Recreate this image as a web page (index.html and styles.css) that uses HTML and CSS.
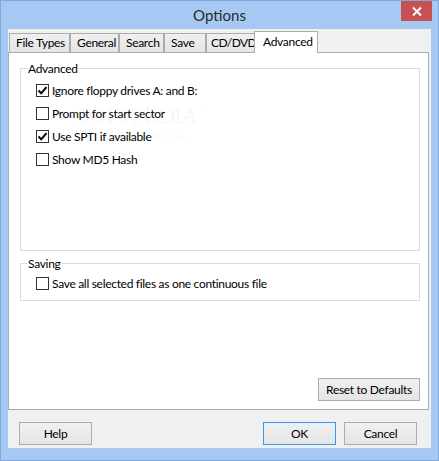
FILE: index.html
```html
<!DOCTYPE html>
<html>
<head>
<meta charset="utf-8">
<title>Options</title>
<link rel="stylesheet" href="styles.css">
</head>
<body>
<div class="window">
  <div class="titlebar">
    <span class="title">Options</span>
    <button class="close" aria-label="Close">
      <svg width="10" height="9" viewBox="0 0 10 9"><path d="M1 0.5 L9 8.5 M9 0.5 L1 8.5" stroke="#fff" stroke-width="2"/></svg>
    </button>
  </div>
  <div class="client">
    <div class="tabstrip">
      <div class="tab t-files">File Types</div>
      <div class="tab t-general">General</div>
      <div class="tab t-search">Search</div>
      <div class="tab t-save">Save</div>
      <div class="tab t-cd">CD/DVD</div>
      <div class="tab active t-adv">Advanced</div>
    </div>
    <div class="panel">
      <fieldset class="group group-adv">
        <legend>Advanced</legend>
        <label class="row"><span class="cb checked"><svg width="11" height="11" viewBox="0 0 11 11"><path d="M1.5 5.5 L4.2 8.3 L9.5 2.2" fill="none" stroke="#000" stroke-width="2"/></svg></span>Ignore floppy drives A: and B:</label>
        <label class="row"><span class="cb"></span>Prompt for start sector</label>
        <label class="row"><span class="cb checked"><svg width="11" height="11" viewBox="0 0 11 11"><path d="M1.5 5.5 L4.2 8.3 L9.5 2.2" fill="none" stroke="#000" stroke-width="2"/></svg></span>Use SPTI if available</label>
        <label class="row"><span class="cb"></span>Show MD5 Hash</label>
        <div class="watermark" aria-hidden="true">SOFTPEDIA<sup>™</sup><span class="wm-url">www.softpedia.com</span></div>
      </fieldset>
      <fieldset class="group group-save">
        <legend>Saving</legend>
        <label class="row"><span class="cb"></span>Save all selected files as one continuous file</label>
      </fieldset>
      <div class="panel-actions">
        <button class="btn btn-reset">Reset to Defaults</button>
      </div>
    </div>
    <div class="dialog-buttons">
      <button class="btn">Help</button>
      <div class="spacer"></div>
      <button class="btn default">OK</button>
      <button class="btn">Cancel</button>
    </div>
  </div>
</div>
</body>
</html>
```

FILE: styles.css
```css
* { box-sizing: border-box; }
html, body { margin: 0; padding: 0; }
body {
  font-family: "Lato", "Noto Sans", sans-serif;
  font-size: 12px;
  letter-spacing: -0.3px;
  color: #000;
  background: #a5c9f2;
}
.window {
  width: 439px;
  height: 461px;
  background: #a5c9f2;
  border: 1px solid #7fa9db;
  display: flex;
  flex-direction: column;
}
.titlebar {
  height: 28px;
  display: grid;
  grid-template-columns: 1fr auto 1fr;
  align-items: center;
}
.title {
  grid-column: 2;
  font-size: 15px;
  letter-spacing: 0;
  color: #2b2b2b;
  line-height: 20px;
  padding-bottom: 1px;
}
.close {
  grid-column: 3;
  justify-self: end;
  align-self: start;
  width: 31px;
  height: 20px;
  margin-right: 6px;
  border: 0;
  padding: 0;
  background: #c75050;
  display: flex;
  align-items: center;
  justify-content: center;
}
.client {
  margin: 0 7px 12px 7px;
  height: 419px;
  background: #f0f0f0;
  padding: 2px 2px 3px 0;
  display: flex;
  flex-direction: column;
}
.tabstrip {
  height: 21px;
  display: flex;
  align-items: flex-end;
  padding-left: 1px;
}
.tab {
  height: 19px;
  border: 1px solid #acacac;
  border-bottom: 0;
  background: linear-gradient(#f0f0f0, #e5e5e5);
  padding-left: 6px;
  line-height: 18px;
  white-space: nowrap;
  overflow: visible;
  flex: none;
}
.t-files { width: 61px; }
.t-general { width: 49px; }
.t-search { width: 45px; }
.t-save { width: 42px; }
.t-cd { width: 50px; padding-left: 4px; letter-spacing: -0.6px; }
.t-adv { width: 64px; margin-left: -2px; }
.tab.active {
  height: 22px;
  margin-bottom: -1px;
  background: #fff;
  padding-left: 8px;
  line-height: 19px;
  position: relative;
  z-index: 1;
}
.panel {
  height: 358px;
  background: #fff;
  border: 1px solid #acacac;
  padding: 8px 8px 8px 11px;
  display: flex;
  flex-direction: column;
}
.group {
  margin: 0;
  border: 1px solid #dcdcdc;
  min-width: 0;
}
.group legend {
  padding: 0 1px;
  margin-left: -9px;
  line-height: 15px;
}
.group-adv {
  padding: 3px 0 79px 15px;
  position: relative;
}
.group-save {
  margin-top: 5px;
  padding: 1px 0 5px 15px;
}
.row {
  height: 23px;
  display: flex;
  align-items: center;
  gap: 3px;
  white-space: nowrap;
  position: relative;
  z-index: 1;
}
.cb {
  width: 13px;
  height: 13px;
  border: 1px solid #333;
  background: #fff;
  display: flex;
  align-items: center;
  justify-content: center;
  flex: none;
}
.watermark {
  position: absolute;
  left: 56px;
  top: 24px;
  font-family: "Liberation Serif", serif;
  font-size: 24px;
  line-height: 24px;
  letter-spacing: -1px;
  color: rgba(0, 0, 0, 0.05);
  pointer-events: none;
  white-space: nowrap;
}
.watermark sup { font-size: 8px; letter-spacing: 0; }
.wm-url {
  display: block;
  font-family: "Liberation Sans", sans-serif;
  font-size: 10px;
  line-height: 12px;
  letter-spacing: 0;
  margin-left: 23px;
  margin-top: 5px;
}
.panel-actions {
  margin-top: auto;
  display: flex;
  justify-content: flex-end;
}
.btn {
  height: 23px;
  border: 1px solid #acacac;
  background: linear-gradient(#f0f0f0, #e5e5e5);
  font-family: inherit;
  font-size: 12px;
  letter-spacing: -0.3px;
  color: #000;
  padding: 0;
  width: 73px;
}
.btn-reset { width: 102px; }
.btn.default { border-color: #3399ff; }
.dialog-buttons {
  margin-top: 12px;
  display: flex;
  gap: 8px;
  padding: 0 12px 0 11px;
}
.spacer { flex: 1; }
```
